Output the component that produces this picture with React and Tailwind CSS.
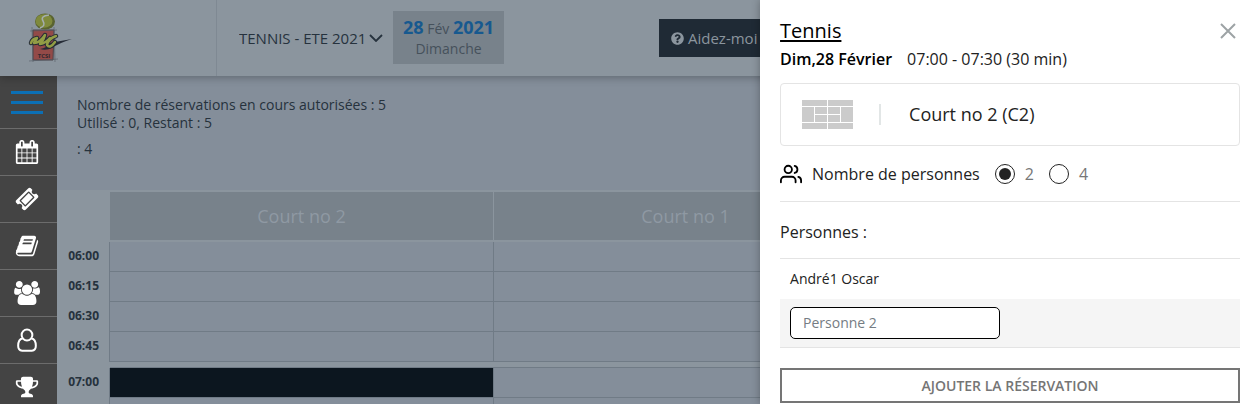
import { useState } from 'react';
import { FaQuestionCircle } from 'react-icons/fa';
import { FiUsers } from 'react-icons/fi';

const MENU = [
  {
    label: 'Calendrier',
    path: 'M192 1664h288v-288h-288v288zm352 0h320v-288h-320v288zm-352-352h288v-320h-288v320zm352 0h320v-320h-320v320zm-352-384h288v-288h-288v288zm736 736h320v-288h-320v288zm-384-736h320v-288h-320v288zm768 736h288v-288h-288v288zm-384-352h320v-320h-320v320zm-352-864v-288q0-13-9.500-22.500t-22.500-9.500h-64q-13 0-22.500 9.500t-9.500 22.500v288q0 13 9.500 22.500t22.500 9.500h64q13 0 22.500-9.500t9.500-22.500zm736 864h288v-320h-288v320zm-384-384h320v-288h-320v288zm384 0h288v-288h-288v288zm32-480v-288q0-13-9.500-22.500t-22.500-9.500h-64q-13 0-22.500 9.500t-9.500 22.500v288q0 13 9.500 22.500t22.500 9.500h64q13 0 22.500-9.500t9.500-22.500zm384-64v1280q0 52-38 90t-90 38h-1408q-52 0-90-38t-38-90v-1280q0-52 38-90t90-38h128v-96q0-66 47-113t113-47h64q66 0 113 47t47 113v96h384v-96q0-66 47-113t113-47h64q66 0 113 47t47 113v96h128q52 0 90 38t38 90z',
  },
  {
    label: 'Tickets',
    path: 'M1024 452l316 316-572 572-316-316zm-211 979l618-618q19-19 19-45t-19-45l-362-362q-18-18-45-18t-45 18l-618 618q-19 19-19 45t19 45l362 362q18 18 45 18t45-18zm889-637l-907 908q-37 37-90.500 37t-90.500-37l-126-126q56-56 56-136t-56-136-136-56-136 56l-125-126q-37-37-37-90.500t37-90.500l907-906q37-37 90.500-37t90.500 37l125 125q-56 56-56 136t56 136 136 56 136-56l126 125q37 37 37 90.500t-37 90.500z',
  },
  {
    label: 'Carnet',
    path: 'M1703 478q40 57 18 129l-275 906q-19 64-76.500 107.500t-122.500 43.500h-923q-77 0-148.500-53.500t-99.500-131.500q-24-67-2-127 0-4 3-27t4-37q1-8-3-21.500t-3-19.500q2-11 8-21t16.500-23.500 16.500-23.500q23-38 45-91.500t30-91.500q3-10 .5-30t-.5-28q3-11 17-28t17-23q21-36 42-92t25-90q1-9-2.500-32t.5-28q4-13 22-30.500t22-22.500q19-26 42.500-84.500t27.500-96.500q1-8-3-25.500t-2-26.500q2-8 9-18t18-23 17-21q8-12 16.500-30.500t15-35 16-36 19.500-32 26.500-23.500 36-11.500 47.500 5.500l-1 3q38-9 51-9h761q74 0 114 56t18 130l-274 906q-36 119-71.500 153.500t-128.500 34.500h-869q-27 0-38 15-11 16-1 43 24 70 144 70h923q29 0 56-15.500t35-41.500l300-987q7-22 5-57 38 15 59 43zm-1064 2q-4 13 2 22.500t20 9.500h608q13 0 25.500-9.500t16.500-22.500l21-64q4-13-2-22.500t-20-9.500h-608q-13 0-25.500 9.500t-16.500 22.500zm-83 256q-4 13 2 22.500t20 9.500h608q13 0 25.500-9.500t16.500-22.500l21-64q4-13-2-22.500t-20-9.500h-608q-13 0-25.500 9.500t-16.500 22.500z',
  },
  {
    label: 'Membres',
    viewBox: '-64 0 1920 1792',
    path: 'M529 896q-162 5-265 128h-134q-82 0-138-40.500t-56-118.500q0-353 124-353 6 0 43.500 21t97.500 42.500 119 21.500q67 0 133-23-5 37-5 66 0 159 93 293zm1071 637q0 120-73 189.500t-194 69.500h-874q-121 0-194-69.500t-73-189.500q0-53 3.500-103.500t14-109 26.500-108.500 43-97.500 62-81 85.500-53.500 111.500-20q10 0 43 21.500t73 48 107 48 135 21.500 135-21.500 107-48 73-48 43-21.500q61 0 111.500 20t85.500 53.500 62 81 43 97.500 26.500 108.500 14 109 3.500 103.500zm-1024-1277q0 106-75 181t-181 75-181-75-75-181 75-181 181-75 181 75 75 181zm704 384q0 159-112.500 271.500t-271.500 112.500-271.500-112.500-112.500-271.500 112.500-271.500 271.500-112.500 271.500 112.500 112.500 271.500zm576 225q0 78-56 118.500t-138 40.500h-134q-103-123-265-128 93-134 93-293 0-29-5-66 66 23 133 23 59 0 119-21.500t97.500-42.500 43.500-21q124 0 124 353zm-128-609q0 106-75 181t-181 75-181-75-75-181 75-181 181-75 181 75 75 181z',
  },
  {
    label: 'Mon profil',
    outline: true,
    path: 'M896 110a400 410 0 0 1 0 820a400 410 0 0 1 0-820zM570 760C320 820 236 1100 236 1330C236 1550 360 1690 530 1690H1262C1432 1690 1556 1550 1556 1330C1556 1100 1472 820 1222 760',
  },
  {
    label: 'Tournois',
    path: 'M522 883q-74-162-74-371h-256v96q0 78 94.500 162t235.500 113zm1078-275v-96h-256q0 209-74 371 141-29 235.500-113t94.500-162zm128-128v128q0 71-41.500 143t-112 130-173 97.500-215.500 44.500q-42 54-95 95-38 34-52.500 72.500t-14.500 89.500q0 54 30.500 91t97.500 37q75 0 133.500 45.500t58.500 114.500v64q0 14-9 23t-23 9h-832q-14 0-23-9t-9-23v-64q0-69 58.500-114.500t133.500-45.500q67 0 97.500-37t30.500-91q0-51-14.500-89.500t-52.500-72.500q-53-41-95-95-113-5-215.500-44.500t-173-97.500-112-130-41.500-143v-128q0-40 28-68t68-28h288v-96q0-66 47-113t113-47h576q66 0 113 47t47 113v96h288q40 0 68 28t28 68z',
  },
];

const COURTS = ['Court no 2', 'Court no 1', 'Court no 3'];
const HOURS = [
  ['06:00', '06:15', '06:30', '06:45'],
  ['07:00', '07:15'],
];
const SELECTED = { time: '07:00', court: 'Court no 2' };

// Two brush strokes of the logo, drawn dark first and then filled in green
const BRUSH = 'M4 31q1-4 6-5l-3 5q6 0 11-8-1 5-5 9 6-1 10-6M29 24q-8 3-9 9 3 4 8-3';

function Logo() {
  return (
    <svg viewBox="0 0 46 52" className="h-[52px] w-[46px]" aria-hidden="true">
      <path d="M6 18h21l-1 30H6z" fill="#934a48" stroke="#4b444a" strokeWidth="1" />
      <path d="M5 15l1 35M27 15l1 35M3 19l27-1M2 49l29-2" stroke="#545b64" strokeWidth="0.6" fill="none" />
      <ellipse cx="18" cy="9.500" rx="10" ry="8" fill="#59632f" />
      <ellipse cx="17" cy="9" rx="8.500" ry="6.800" fill="#7f8a3c" />
      <path d="M22 3q-9 1-6 6t-3 7" fill="none" stroke="#a4adae" strokeWidth="1.500" />
      <path d="M23 31q10-2 22-4-13 4-20 9-6 3-12 1 7-1 10-6z" fill="#252b36" />
      <g fill="none" strokeLinecap="round" strokeLinejoin="round">
        <path d={BRUSH} stroke="#252b36" strokeWidth="4.500" />
        <path d={BRUSH} stroke="#929d45" strokeWidth="2.500" />
      </g>
      <text x="17" y="45.500" textAnchor="middle" fontSize="6" fontWeight="700" fontFamily="Open Sans, sans-serif" fill="#31282f">
        TCSI
      </text>
    </svg>
  );
}

function MenuIcon({ icon }) {
  return (
    <svg
      viewBox={icon.viewBox ?? '0 0 1792 1792'}
      className="h-6 w-[26px]"
      fill={icon.outline ? 'none' : 'currentColor'}
      stroke={icon.outline ? 'currentColor' : 'none'}
      strokeWidth="150"
      aria-hidden="true"
    >
      <path d={icon.path} />
    </svg>
  );
}

function CourtIcon() {
  return (
    <svg viewBox="0 0 51 29" className="h-[29px] w-[51px]" fill="#cbcbcb" aria-hidden="true">
      <path d="M0 0h25v6H0zM26 0h25v6H26zM0 7h12v15H0zM13 7h12v7H13zM26 7h12v7H26zM13 15h12v7H13zM26 15h12v7H26zM39 7h12v15H39zM0 23h25v6H0zM26 23h25v6H26z" />
    </svg>
  );
}

function Header() {
  return (
    <header className="relative z-10 flex h-[76px] shrink-0 bg-[#8b959e] shadow-[0_2px_8px_rgba(0,0,0,0.25)]">
      <div className="flex w-[217px] shrink-0 items-center border-r border-[#7f8993] pl-[27px]">
        <Logo />
      </div>
      <div className="flex items-center pl-[22px] text-[#26323d]">
        <div className="relative">
          <select
            aria-label="Planning"
            className="cursor-pointer appearance-none bg-transparent pr-4 text-[15px] font-medium outline-none"
          >
            <option>TENNIS - ETE 2021</option>
          </select>
          <svg viewBox="0 0 14 8" className="pointer-events-none absolute right-0 top-2 h-2 w-[14px]" aria-hidden="true">
            <path d="M1 1l6 6 6-6" fill="none" stroke="currentColor" strokeWidth="1.800" />
          </svg>
        </div>
      </div>
      <button
        type="button"
        className="mt-[11px] ml-[10px] h-[53px] w-[111px] bg-[#78828b] text-sm leading-5 text-[#46515b]"
      >
        <span className="block">
          <b className="text-lg leading-5 text-[#17598f]">28</b> Fév <b className="text-lg leading-5 text-[#17598f]">2021</b>
        </span>
        <span className="block">Dimanche</span>
      </button>
      <button
        type="button"
        className="mt-[19px] ml-[155px] flex h-[38px] items-center gap-1 bg-[#1f2a35] px-3 text-[15px] font-medium text-[#8b959e]"
      >
        <FaQuestionCircle className="size-[13px]" />
        Aidez-moi
      </button>
    </header>
  );
}

function Sidebar() {
  return (
    <nav className="w-[57px] shrink-0 bg-[#444] text-white">
      <button
        type="button"
        aria-label="Menu"
        className="flex h-[53px] w-full flex-col items-start justify-center gap-[7px] border-b border-[#6c6c6c] pl-[11px]"
      >
        <span className="h-[3px] w-8 bg-[#0c6fb4]" />
        <span className="h-[3px] w-8 bg-[#0c6fb4]" />
        <span className="h-[3px] w-8 bg-[#0c6fb4]" />
      </button>
      {MENU.map((item) => (
        <a
          key={item.label}
          href="#"
          aria-label={item.label}
          className="flex h-[47px] items-center border-b border-[#6c6c6c] pl-[14px]"
        >
          <MenuIcon icon={item} />
        </a>
      ))}
    </nav>
  );
}

function Planning() {
  return (
    <table className="table-fixed border-separate border-spacing-0 bg-[#8b959e]">
      <thead>
        <tr>
          <th className="w-[53px] min-w-[53px] border-t-2 border-[#8b959e]" aria-label="Heure" />
          {COURTS.map((court) => (
            <th
              key={court}
              className="h-[52px] w-96 min-w-96 border-y-2 border-r border-[#8b959e] bg-[#78828b] p-0 text-lg font-normal text-[#8f99a3]"
            >
              {court}
            </th>
          ))}
        </tr>
      </thead>
      {HOURS.map((times, index) => (
        <tbody key={times[0]}>
          {index > 0 && (
            <tr>
              <td className="h-[6px] p-0" />
              <td colSpan={COURTS.length} className="h-[6px] border-b border-[#707b86] p-0" />
            </tr>
          )}
          {times.map((time) => (
            <tr key={time}>
              <th className="h-[30px] border-r border-[#707b86] pt-0 pr-[10px] pb-[2px] pl-0 text-right text-xs font-bold text-[#26323d]">
                {time}
              </th>
              {COURTS.map((court) => (
                <td
                  key={court}
                  className={
                    time === SELECTED.time && court === SELECTED.court
                      ? 'border-r border-b border-[#707b86] bg-[#0c161f] p-0'
                      : 'border-r border-b border-[#707b86] bg-[#848e9a] p-0'
                  }
                />
              ))}
            </tr>
          ))}
        </tbody>
      ))}
    </table>
  );
}

function BookingPanel() {
  const [count, setCount] = useState(2);

  return (
    <aside className="absolute inset-y-0 right-0 z-20 w-[39%] overflow-hidden bg-white pt-4 pr-[6px] pl-5 text-[#222] shadow-[0_0_8px_rgba(0,0,0,0.3)]">
      <div className="flex items-center justify-between">
        <h2 className="text-xl leading-[30px] text-black underline underline-offset-2">Tennis</h2>
        <button type="button" aria-label="Fermer" className="p-1 text-[#9da3a5]">
          <svg viewBox="0 0 16 16" className="size-4" aria-hidden="true">
            <path d="M1 1l14 14M15 1L1 15" stroke="currentColor" strokeWidth="2" />
          </svg>
        </button>
      </div>
      <p className="flex gap-[15px] leading-[26px]">
        <strong className="font-semibold text-black">Dim,28 Février</strong>
        <span>07:00 - 07:30 (30 min)</span>
      </p>

      <div className="mt-[11px] flex h-[63px] items-center rounded border border-[#e4e4e4] pl-[21px]">
        <CourtIcon />
        <span className="mr-7 ml-[26px] h-[21px] w-[2px] bg-[#e2e6e6]" />
        <span className="pb-[2px] text-lg">Court no 2 (C2)</span>
      </div>

      <fieldset className="flex h-14 items-center border-b border-[#e4e4e4]">
        <FiUsers className="mr-[10px] size-[22px] text-black" />
        <span className="mr-[15px]">Nombre de personnes</span>
        {[2, 4].map((value) => (
          <label key={value} className="mr-[15px] flex items-center gap-[10px] text-[#777]">
            <input
              type="radio"
              name="count"
              value={value}
              checked={count === value}
              onChange={() => setCount(value)}
              className="size-5 appearance-none rounded-full border border-[#222] checked:bg-[#222] checked:bg-clip-content checked:p-[3px]"
            />
            {value}
          </label>
        ))}
      </fieldset>

      <h3 className="border-b border-[#e4e4e4] pt-[18px] pb-[14px] leading-6">Personnes :</h3>
      <p className="px-[10px] py-[10px] text-sm leading-5">André1 Oscar</p>
      <div className="border-b border-[#e4e4e4] bg-[#f5f5f5] px-[10px] py-2">
        <input
          type="text"
          aria-label="Personne 2"
          placeholder="Personne 2"
          className="block h-8 w-[210px] rounded-[5px] border border-black bg-white px-3 pb-[2px] text-sm outline-none placeholder:text-[#757c83]"
        />
      </div>

      <button
        type="button"
        className="mt-5 h-[35px] w-full border-2 border-[#757575] text-sm font-semibold text-[#757575]"
      >
        AJOUTER LA RÉSERVATION
      </button>
    </aside>
  );
}

export default function App() {
  return (
    <div className="relative flex h-screen flex-col overflow-hidden bg-[#848e9a] font-['Open_Sans',sans-serif]">
      <Header />
      <div className="flex min-h-0 flex-1">
        <Sidebar />
        <main className="min-w-0 flex-1 overflow-hidden">
          <div className="h-[114px] px-5 pt-5 text-sm leading-[18px] text-[#26323d]">
            <p>Nombre de réservations en cours autorisées : 5</p>
            <p>Utilisé : 0, Restant : 5</p>
            <p className="mt-2">: 4</p>
          </div>
          <Planning />
        </main>
      </div>
      <BookingPanel />
    </div>
  );
}
